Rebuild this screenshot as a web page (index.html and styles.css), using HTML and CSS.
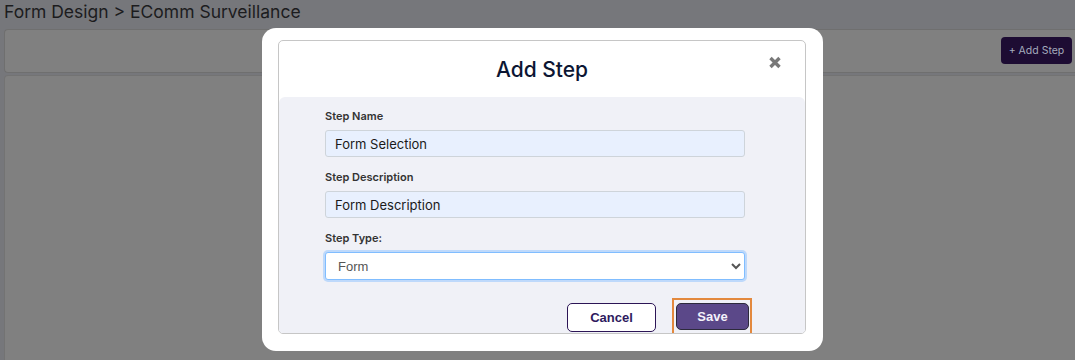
FILE: index.html
```html
<!DOCTYPE html>
<html lang="en">
<head>
  <meta charset="UTF-8">
  <meta name="viewport" content="width=device-width, initial-scale=1.0">
  <title>Form Design</title>
  <link rel="stylesheet" href="styles.css">
</head>
<body>
  <div class="page-title">Form Design &gt; EComm Surveillance</div>
  <div class="toolbar">
    <button class="add-btn">+ Add Step</button>
  </div>
  <div class="steps-card"></div>

  <!-- modal layer -->
  <div class="modal-layer">
    <div class="modal">
      <div class="modal-inner">
        <div class="modal-header">
          <h2>Add Step</h2>
          <span class="close-btn">
            <svg width="14" height="13" viewBox="0 0 14 13">
              <path d="M2.5 2 L11.5 11 M11.5 2 L2.5 11" stroke="#787878" stroke-width="3.4" stroke-linecap="butt"/>
            </svg>
          </span>
        </div>
        <div class="modal-body">
          <div class="field">
            <label>Step Name</label>
            <input type="text" class="text-input" value="Form Selection">
          </div>
          <div class="field">
            <label>Step Description</label>
            <input type="text" class="text-input" value="Form Description">
          </div>
          <div class="field">
            <label>Step Type:</label>
            <select class="select-input">
              <option>Form</option>
              <option>Approval</option>
            </select>
          </div>
          <div class="actions">
            <button class="btn-cancel">Cancel</button>
            <span class="focus-ring">
              <button class="btn-save">Save</button>
            </span>
          </div>
        </div>
      </div>
    </div>
  </div>
</body>
</html>
```

FILE: styles.css
```css
body {
  font-family: 'Inter', 'Liberation Sans', sans-serif;
  background-color: #76777b;
  margin: 0;
  height: 360px;
  overflow: hidden;
}
.page-title {
  box-sizing: border-box;
  height: 29px;
  padding: 2px 0 0 4px;
  font-size: 17.5px;
  line-height: 20px;
  color: #1c1c1e;
}
.toolbar {
  box-sizing: border-box;
  height: 44px;
  margin-left: 4px;
  padding-right: 3px;
  background-color: #808080;
  border: 1px solid #6f6f6f;
  border-right: none;
  border-radius: 4px 0 0 4px;
  display: flex;
  justify-content: flex-end;
  align-items: center;
}
.add-btn {
  height: 27px;
  width: 71px;
  padding: 0;
  margin-top: -1px;
  background-color: #1d0c33;
  color: #a4abbd;
  border: none;
  border-radius: 4px;
  font-family: 'Inter', sans-serif;
  font-size: 10.5px;
}
.steps-card {
  height: 300px;
  margin: 2px 0 0 4px;
  background-color: #808080;
  border: 1px solid #737373;
  border-right: none;
  border-radius: 4px 0 0 0;
}

.modal-layer {
  position: fixed;
  top: 0;
  left: 0;
  right: 0;
  bottom: 0;
  display: flex;
  justify-content: center;
  align-items: flex-start;
  padding: 28px 0 0 10px;
}
.modal {
  box-sizing: border-box;
  width: 561px;
  height: 323px;
  background-color: #fff;
  border-radius: 14px;
  padding: 12px 17px 17px 16px;
}
.modal-inner {
  height: 100%;
  box-sizing: border-box;
  border: 1px solid #c6c6c6;
  border-radius: 5px;
  overflow: hidden;
  display: flex;
  flex-direction: column;
}
.modal-header {
  height: 56px;
  flex-shrink: 0;
  display: flex;
  justify-content: center;
  align-items: center;
  position: relative;
}
.modal-header h2 {
  margin: 1px 0 0 0;
  font-size: 21px;
  font-weight: 500;
  color: #0c1633;
}
.close-btn {
  position: absolute;
  right: 23px;
  top: 15px;
  line-height: 0;
}
.modal-body {
  flex: 1;
  background-color: #f0f1f7;
  border-radius: 6px 6px 0 0;
  padding: 12px 60px 0 46px;
}
.field {
  margin-bottom: 13px;
}
.field label {
  display: block;
  font-size: 11px;
  font-weight: 600;
  line-height: 14px;
  color: #333;
  margin-bottom: 7px;
}
.text-input {
  box-sizing: border-box;
  width: 100%;
  height: 27px;
  padding: 0 9px;
  background-color: #e8f0fe;
  border: 1px solid #ced4da;
  border-radius: 3px;
  font-family: 'Inter', sans-serif;
  font-size: 13px;
  color: #1a1a1a;
}
.select-input {
  box-sizing: border-box;
  width: 100%;
  height: 28px;
  padding: 0 8px;
  background-color: #fff;
  border: 1px solid #80bdff;
  border-radius: 3px;
  box-shadow: 0 0 0 2px rgba(128, 189, 255, 0.45);
  font-family: 'Liberation Sans', Arial, sans-serif;
  font-size: 13px;
  color: #555;
  outline: none;
}
.actions {
  display: flex;
  justify-content: flex-end;
  align-items: flex-start;
  gap: 16px;
  margin: 18px -7px 0 0;
}
.btn-cancel {
  width: 89px;
  height: 29px;
  margin-top: 5px;
  background-color: #fff;
  border: 1px solid #2c1556;
  border-radius: 5px;
  font-family: 'Liberation Sans', Arial, sans-serif;
  font-size: 13px;
  font-weight: bold;
  color: #2e1a5e;
}
.focus-ring {
  display: flex;
  padding: 3px 1px 3px 2px;
  border: 2px solid #e3893e;
}
.btn-save {
  width: 73px;
  height: 27px;
  background-color: #5b4889;
  border: 1px solid #2d2a3c;
  border-radius: 5px;
  font-family: 'Liberation Sans', Arial, sans-serif;
  font-size: 13px;
  font-weight: bold;
  color: #f4f2fa;
}
```
